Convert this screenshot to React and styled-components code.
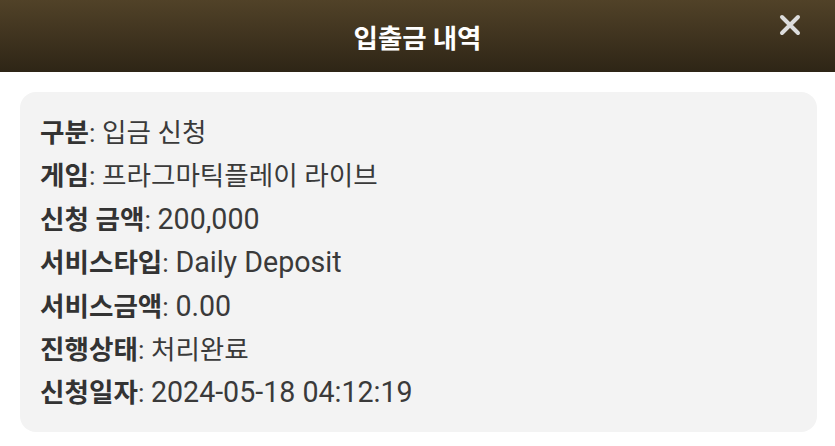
import styled, { createGlobalStyle } from "styled-components";

const GlobalStyle = createGlobalStyle`
	body {
		margin: 0;
		background: #ffffff;
		font-family: Roboto, "Noto Sans CJK KR", sans-serif;
	}
`;

const Container = styled.div`
	width: 835px;
	height: 446px;
	display: flex;
	flex-direction: column;
`;

const Header = styled.div`
	position: relative;
	height: 72px;
	display: flex;
	align-items: center;
	justify-content: center;
	background: linear-gradient(#514228, #2e2516);
`;

const Title = styled.h1`
	margin: 0;
	font-family: "Noto Sans CJK KR", sans-serif;
	font-size: 26.5px;
	font-weight: 700;
	color: #ffffff;
`;

const Close = styled.button`
	position: absolute;
	right: 30px;
	top: 11px;
	width: 30px;
	height: 28px;
	padding: 0;
	border: none;
	background: none;
	color: #dcdcdc;
	cursor: pointer;
	display: flex;
	align-items: center;
	justify-content: center;
`;

const Body = styled.div`
	padding: 20px 18px 14px 20px;
`;

const Card = styled.div`
	background: #f3f3f3;
	border-radius: 16px;
	padding: 19px 20px 17px 20px;
`;

const Row = styled.div`
	font-size: 26.6px;
	line-height: 43.4px;
	color: #3a3a3a;
	white-space: nowrap;
`;

const Label = styled.b`
	font-weight: 700;
	color: #333333;
`;

const Value = styled.span`
	font-size: ${(p) => (p.$latin ? "28.6px" : "inherit")};
	line-height: 1;
`;

const rows = [
	["구분", "입금 신청"],
	["게임", "프라그마틱플레이 라이브"],
	["신청 금액", "200,000", true],
	["서비스타입", "Daily Deposit", true],
	["서비스금액", "0.00", true],
	["진행상태", "처리완료"],
	["신청일자", "2024-05-18 04:12:19", true],
];

const App = () => {
	return (
		<Container>
			<GlobalStyle />
			<Header>
				<Title>입출금 내역</Title>
				<Close aria-label="close">
					<svg width="22" height="22" viewBox="0 0 22 22">
						<path
							d="M3 3 L19 19 M19 3 L3 19"
							stroke="currentColor"
							strokeWidth="4"
							strokeLinecap="round"
						/>
					</svg>
				</Close>
			</Header>
			<Body>
				<Card>
					{rows.map(([label, value, latin]) => (
						<Row key={label}>
							<Label>{label}</Label>: <Value $latin={latin}>{value}</Value>
						</Row>
					))}
				</Card>
			</Body>
		</Container>
	);
};

export default App;
